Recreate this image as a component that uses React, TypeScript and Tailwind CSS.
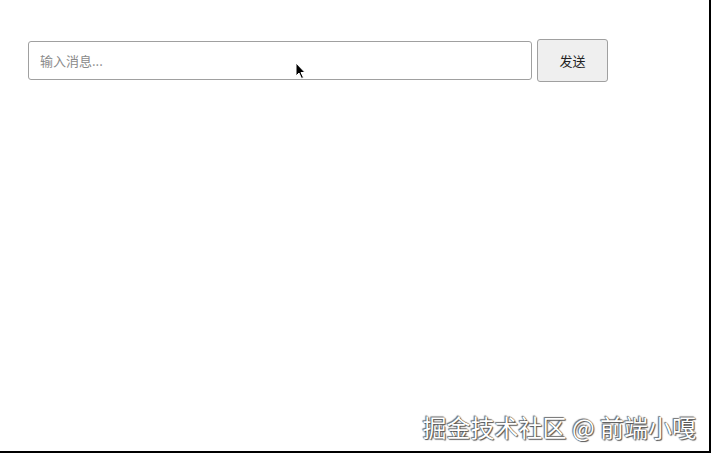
export default function App() {
  return (
    <div className="relative w-[711px] h-[453px] bg-white border-r-2 border-b-2 border-black overflow-hidden font-['Noto_Sans_CJK_SC','Noto_Sans',sans-serif]">
      <div className="flex items-center gap-[5px] pl-[28px] pt-[39px]">
        <input
          type="text"
          placeholder="输入消息..."
          className="w-[504px] h-[39px] px-[11px] text-[13px] text-[#333] placeholder:text-[#8a8a8a] border border-[#a0a0a0] rounded-[3px] outline-none bg-white"
        />
        <button className="w-[71px] h-[43px] text-[13px] text-[#222] bg-[#efefef] border border-[#a0a0a0] rounded-[3px]">
          发送
        </button>
      </div>

      {/* mouse pointer */}
      <svg
        className="absolute left-[295px] top-[62px]"
        width="12"
        height="18"
        viewBox="0 0 12 18"
      >
        <path d="M1 1 L1 14 L4 11 L6.5 16.5 L8.5 15.5 L6 10.5 L10 10.5 Z" fill="#000" stroke="#fff" strokeWidth="1" />
      </svg>

      {/* watermark */}
      <div className="absolute right-[13px] bottom-[12px] text-[24px] leading-none text-white [text-shadow:0_0_1px_#333,1px_1px_1px_#555,-1px_-1px_1px_#777] whitespace-nowrap">
        掘金技术社区 @ 前端小嘎
      </div>
    </div>
  );
}
